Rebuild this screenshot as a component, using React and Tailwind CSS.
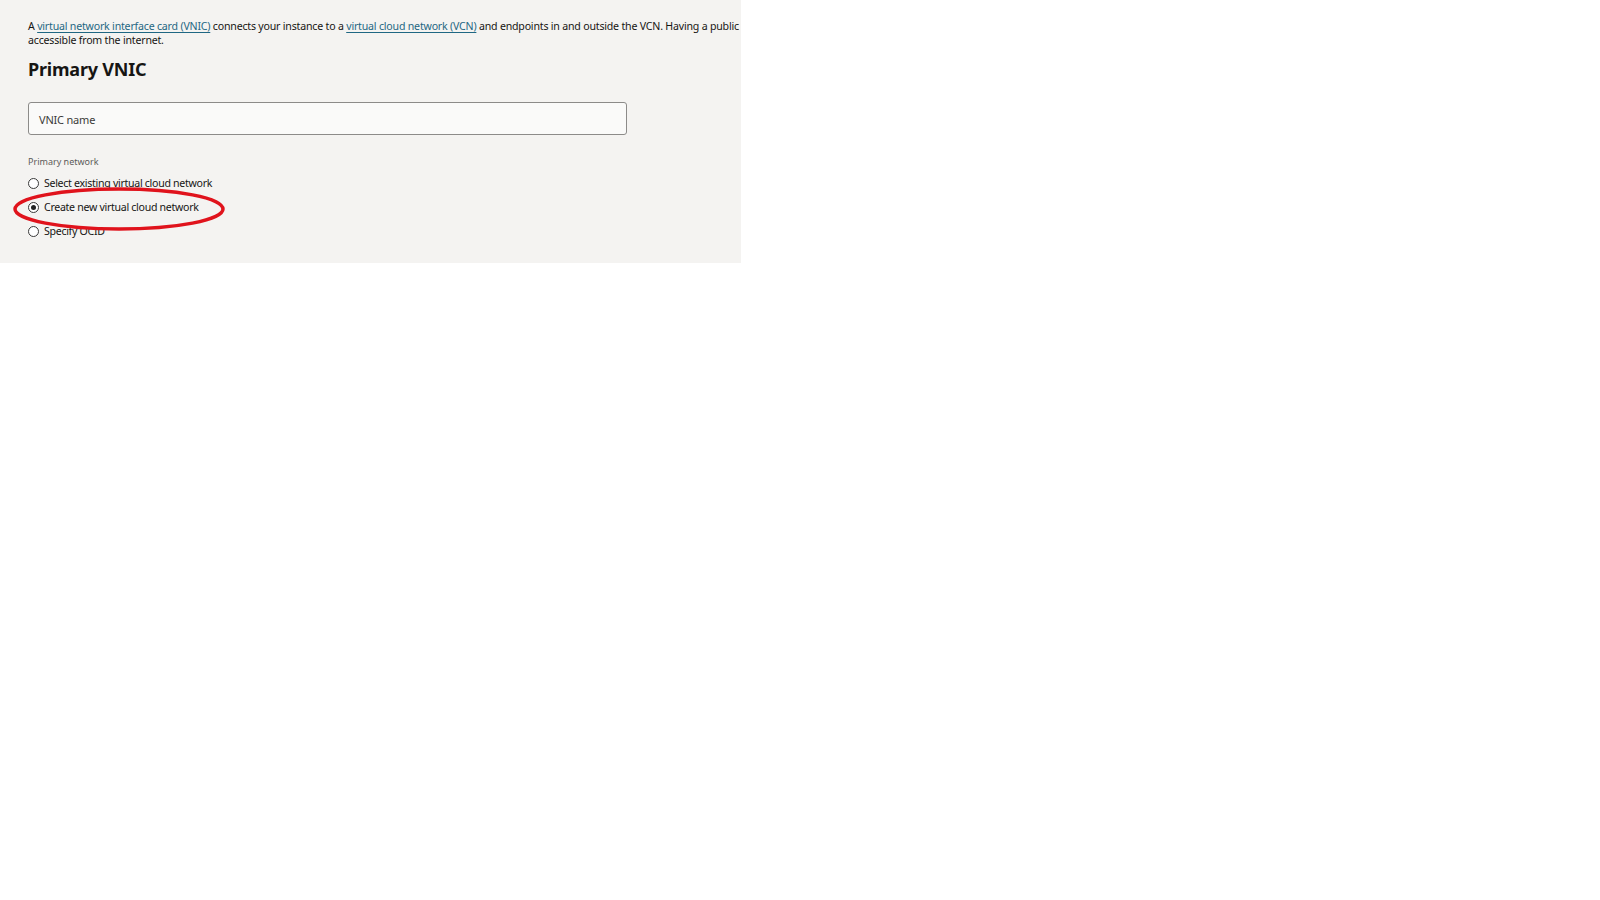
import React from 'react';

const options = [
  { id: 'existing', label: 'Select existing virtual cloud network' },
  { id: 'new', label: 'Create new virtual cloud network' },
  { id: 'ocid', label: 'Specify OCID' },
];

const Radio = ({ checked }) => (
  <span className="w-[11px] h-[11px] rounded-full border border-[#3a3a3a] bg-white flex items-center justify-center shrink-0">
    {checked && <span className="w-[5px] h-[5px] rounded-full bg-[#222]" />}
  </span>
);

export default function App() {
  const [network, setNetwork] = React.useState('new');

  return (
    <div className="w-[1600px] h-[900px] bg-white" style={{ fontFamily: '"Noto Sans", "Open Sans", sans-serif' }}>
      <div className="relative w-[741px] h-[263px] bg-[#f4f3f1] overflow-hidden pl-[28px] pt-[19px]">
        <p className="text-[10.6px] leading-[14px] text-[#161513] whitespace-nowrap tracking-[-0.2px]">
          A{' '}
          <a className="text-[#1f6783] underline underline-offset-2">virtual network interface card (VNIC)</a>{' '}
          connects your instance to a{' '}
          <a className="text-[#1f6783] underline underline-offset-2">virtual cloud network (VCN)</a>{' '}
          and endpoints in and outside the VCN. Having a public IP address makes your instance
          <br />
          accessible from the internet.
        </p>

        <h2 className="mt-[10px] text-[18px] leading-[24px] font-bold text-[#161513] tracking-[-0.2px]">Primary VNIC</h2>

        <div className="mt-[21px] w-[599px] h-[33px] border border-[#8c8b89] rounded-[3px] bg-[#fafaf9] flex items-center px-[10px] pt-[3px]">
          <span className="text-[11px] text-[#3b3a38] tracking-[-0.2px]">VNIC name</span>
        </div>

        <div className="mt-[21px] text-[9px] leading-[12px] text-[#5c5b59]">Primary network</div>

        <div className="mt-[8px] flex flex-col gap-[10px]">
          {options.map(o => (
            <label key={o.id} className="flex items-center gap-[5px] h-[14px] cursor-pointer" onClick={() => setNetwork(o.id)}>
              <Radio checked={network === o.id} />
              <span className="text-[10.6px] leading-[14px] text-[#161513] tracking-[-0.3px]">{o.label}</span>
            </label>
          ))}
        </div>

        <svg className="absolute left-[10px] top-[184px] pointer-events-none" width="220" height="50" viewBox="0 0 220 50">
          <ellipse cx="109" cy="25" rx="104" ry="20" fill="none" stroke="#e0131c" strokeWidth="3.5" />
        </svg>
      </div>
    </div>
  );
}
